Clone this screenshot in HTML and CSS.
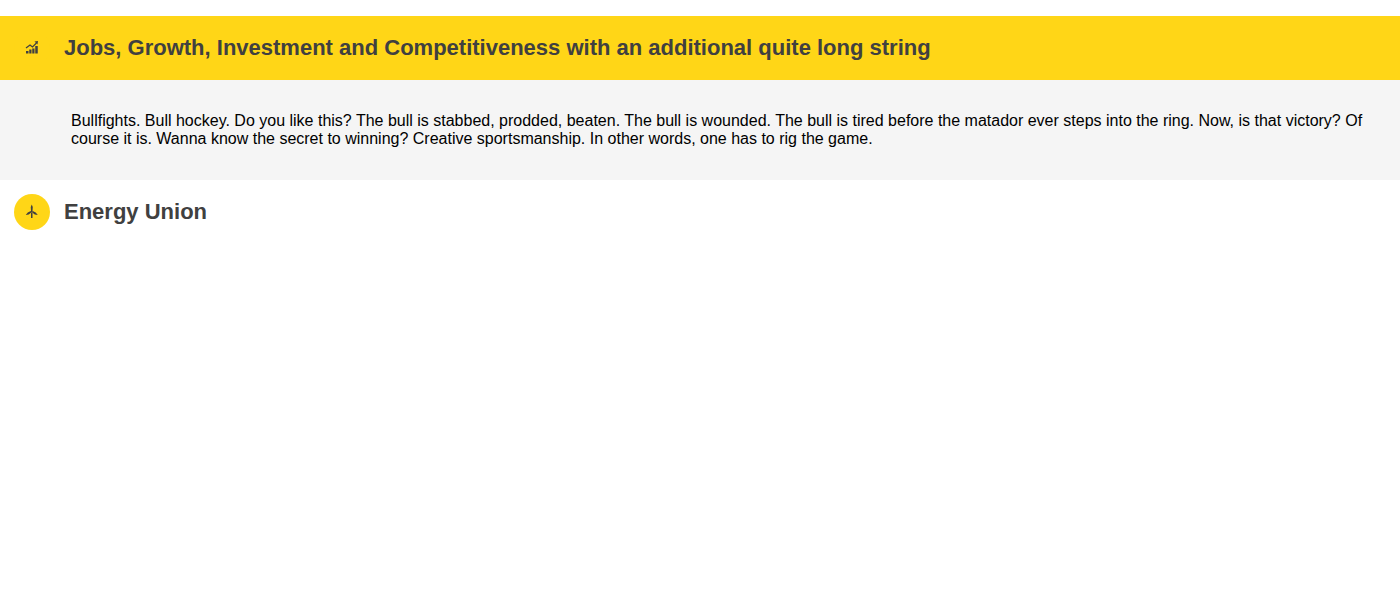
FILE: index.html
```html
<!DOCTYPE html>
<html lang="en">
<head>
<meta charset="utf-8">
<title>Priorities</title>
<link rel="stylesheet" href="styles.css">
</head>
<body>
<main class="accordion">
  <h2 class="accordion-heading">
    <button class="accordion-toggle is-open" type="button" id="jobs-toggle" aria-expanded="true" aria-controls="jobs-panel">
      <span class="accordion-icon">
        <svg viewBox="0 0 24 28" aria-hidden="true">
          <path class="fill" d="M0 20h5v5H0zM6.500 17h4.500v8H6.500zM12.500 15h4.500v10h-4.500zM18.500 10h5v15h-5z"/>
          <path class="line" d="M0 14l8-6 5 4 8-8"/>
          <path class="fill" d="M17 1l7-1-1 7z"/>
        </svg>
      </span>
      <span class="accordion-title">Jobs, Growth, Investment and Competitiveness with an additional quite long string</span>
    </button>
  </h2>
  <section class="accordion-panel" id="jobs-panel" aria-labelledby="jobs-toggle">
    <p class="accordion-text">Bullfights. Bull hockey. Do you like this? The bull is stabbed, prodded, beaten. The bull is wounded. The bull is tired before the matador ever steps into the ring. Now, is that victory? Of course it is. Wanna know the secret to winning? Creative sportsmanship. In other words, one has to rig the game.</p>
  </section>
  <h2 class="accordion-heading">
    <button class="accordion-toggle" type="button" aria-expanded="false">
      <span class="accordion-icon">
        <svg viewBox="0 0 24 28" aria-hidden="true">
          <path class="fill" d="M11.500-1l2 5-.500 8h-3l-.500-8zM9.500 12l1 3-5 4-6 1 4-5zM13.500 12l-1 3 5 4 6 1-4-5zM10 16h3v10h-3z"/>
          <circle class="fill" cx="11.500" cy="13.500" r="2"/>
        </svg>
      </span>
      <span class="accordion-title">Energy Union</span>
    </button>
  </h2>
</main>
</body>
</html>
```
FILE: styles.css
```css
body {
  margin: 0;
  background: #fff;
  color: #000;
  font: 16px/18px "Liberation Sans", Arial, sans-serif;
}

.accordion {
  padding-top: 16px;
}

.accordion-heading {
  margin: 0;
}

.accordion-toggle {
  display: flex;
  align-items: center;
  gap: 14px;
  width: 100%;
  min-height: 64px;
  padding: 14px;
  border: 0;
  background: #fff;
  color: #404040;
  font: bold 22px/28px "Liberation Sans", Arial, sans-serif;
  text-align: left;
  cursor: pointer;
}

.accordion-toggle.is-open {
  background: #ffd617;
}

.accordion-icon {
  display: flex;
  flex: none;
  align-items: center;
  justify-content: center;
  width: 36px;
  height: 36px;
  border-radius: 50%;
  background: #ffd617;
}

.accordion-icon svg {
  width: 12px;
  height: 14px;
  overflow: visible;
}

.fill {
  fill: #404040;
}

.line {
  fill: none;
  stroke: #404040;
  stroke-width: 2.5;
}

.accordion-panel {
  padding: 32px 24px 32px 71px;
  background: #f5f5f5;
}

.accordion-text {
  margin: 0;
}
```
